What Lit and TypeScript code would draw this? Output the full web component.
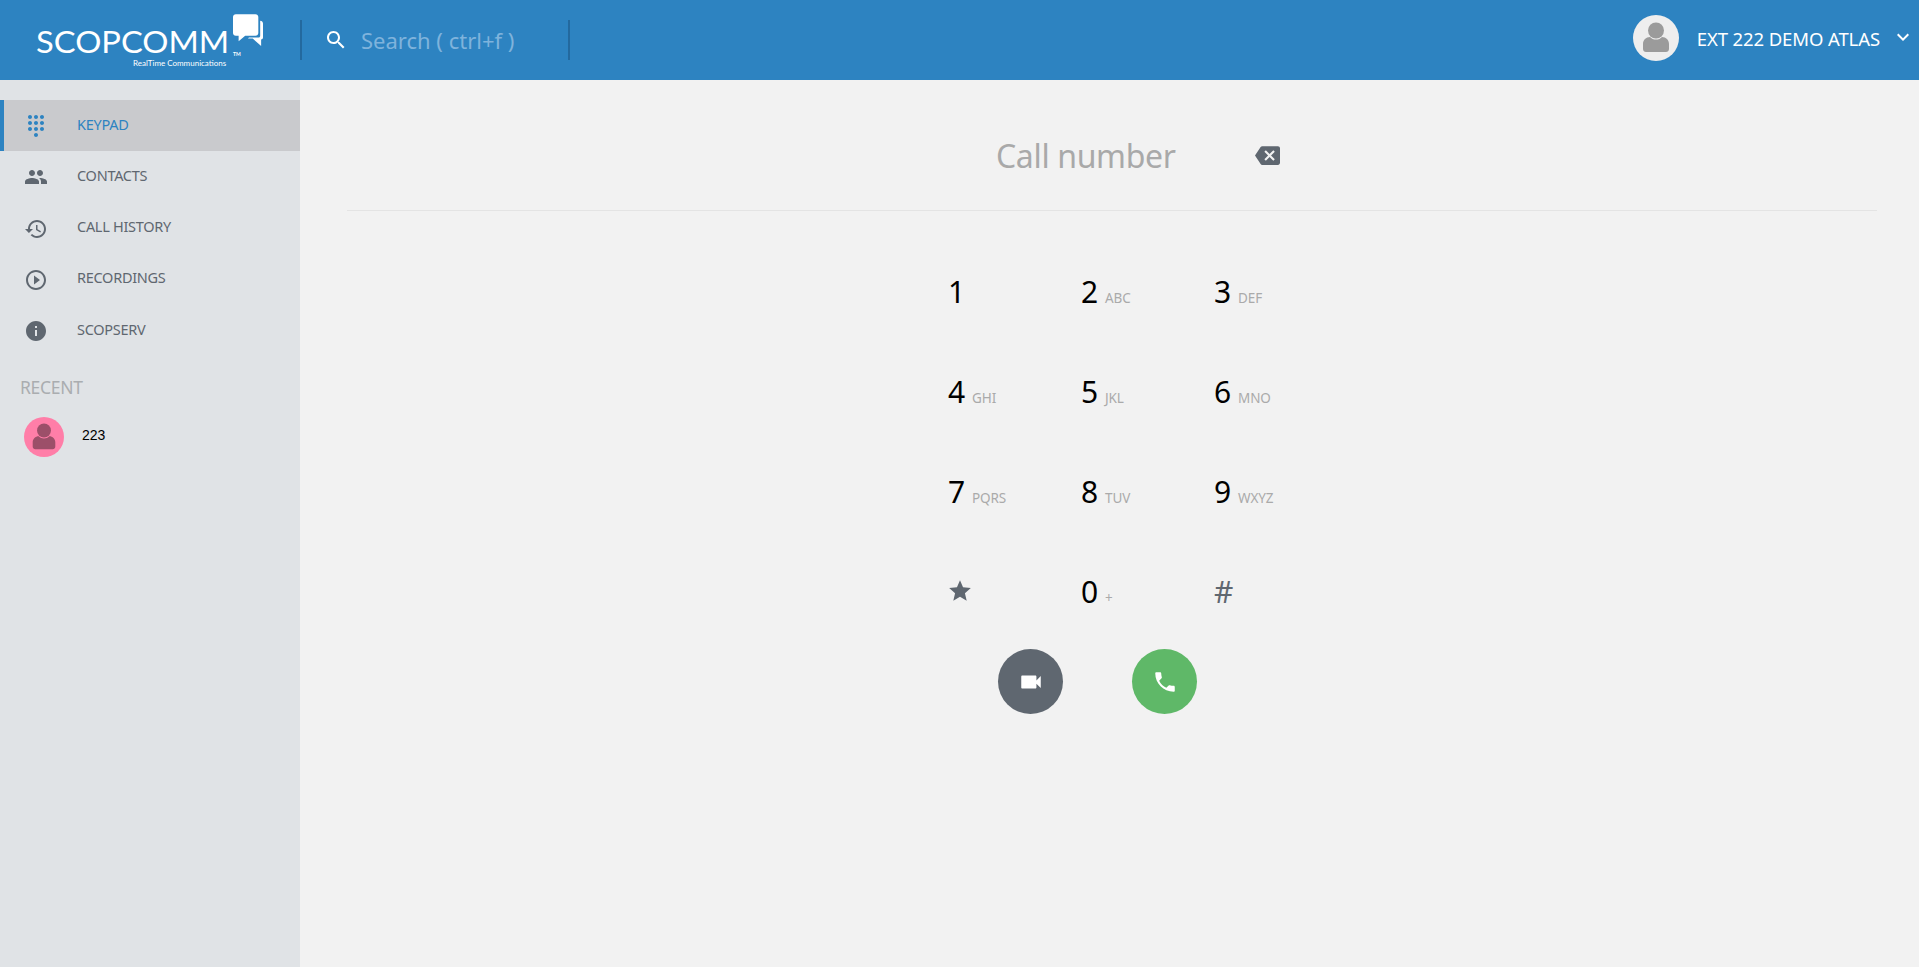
import { LitElement, html, css, svg } from "lit";
import { customElement } from "lit/decorators.js";

const P: Record<string, string> = {
  dialpad: "M12 19c-1.1 0-2 .9-2 2s.9 2 2 2 2-.9 2-2-.9-2-2-2zM6 1c-1.1 0-2 .9-2 2s.9 2 2 2 2-.9 2-2-.9-2-2-2zm0 6c-1.1 0-2 .9-2 2s.9 2 2 2 2-.9 2-2-.9-2-2-2zm0 6c-1.1 0-2 .9-2 2s.9 2 2 2 2-.9 2-2-.9-2-2-2zm12-8c1.1 0 2-.9 2-2s-.9-2-2-2-2 .9-2 2 .9 2 2 2zm-6 8c-1.1 0-2 .9-2 2s.9 2 2 2 2-.9 2-2-.9-2-2-2zm6 0c-1.1 0-2 .9-2 2s.9 2 2 2 2-.9 2-2-.9-2-2-2zm0-6c-1.1 0-2 .9-2 2s.9 2 2 2 2-.9 2-2-.9-2-2-2zm-6 0c-1.1 0-2 .9-2 2s.9 2 2 2 2-.9 2-2-.9-2-2-2zm0-6c-1.1 0-2 .9-2 2s.9 2 2 2 2-.9 2-2-.9-2-2-2z",
  people: "M16 11c1.66 0 2.99-1.34 2.99-3S17.66 5 16 5c-1.66 0-3 1.34-3 3s1.34 3 3 3zm-8 0c1.66 0 2.99-1.34 2.99-3S9.66 5 8 5C6.34 5 5 6.34 5 8s1.34 3 3 3zm0 2c-2.33 0-7 1.17-7 3.5V19h14v-2.5c0-2.33-4.67-3.5-7-3.5zm8 0c-.29 0-.62.02-.97.05 1.16.84 1.97 1.97 1.97 3.45V19h6v-2.5c0-2.33-4.67-3.5-7-3.5z",
  history: "M13 3c-4.97 0-9 4.03-9 9H1l3.89 3.89.07.14L9 12H6c0-3.87 3.13-7 7-7s7 3.13 7 7-3.13 7-7 7c-1.93 0-3.68-.79-4.94-2.06l-1.42 1.42C8.27 19.99 10.51 21 13 21c4.97 0 9-4.03 9-9s-4.03-9-9-9zm-1 5v5l4.28 2.54.72-1.21-3.5-2.08V8H12z",
  play: "M10 16.5l6-4.5-6-4.5v9zM12 2C6.48 2 2 6.48 2 12s4.48 10 10 10 10-4.48 10-10S17.52 2 12 2zm0 18c-4.41 0-8-3.59-8-8s3.59-8 8-8 8 3.59 8 8-3.59 8-8 8z",
  info: "M12 2C6.48 2 2 6.48 2 12s4.48 10 10 10 10-4.48 10-10S17.52 2 12 2zm1 15h-2v-6h2v6zm0-8h-2V7h2v2z",
  backspace: "M22 3H7c-.69 0-1.23.35-1.59.88L0 12l5.41 8.11c.36.53.9.89 1.59.89h15c1.1 0 2-.9 2-2V5c0-1.1-.9-2-2-2zm-3 12.59L17.59 17 14 13.41 10.41 17 9 15.59 12.59 12 9 8.41 10.41 7 14 10.59 17.59 7 19 8.41 15.41 12 19 15.59z",
  video: "M17 10.5V7c0-.55-.45-1-1-1H4c-.55 0-1 .45-1 1v10c0 .55.45 1 1 1h12c.55 0 1-.45 1-1v-3.5l4 4v-11l-4 4z",
  phone: "M6.62 10.79c1.44 2.83 3.76 5.14 6.59 6.59l2.2-2.2c.27-.27.67-.36 1.02-.24 1.12.37 2.33.57 3.57.57.55 0 1 .45 1 1V20c0 .55-.45 1-1 1-9.39 0-17-7.61-17-17 0-.55.45-1 1-1h3.5c.55 0 1 .45 1 1 0 1.25.2 2.45.57 3.57.11.35.03.74-.25 1.02l-2.2 2.2z",
  search: "M15.5 14h-.79l-.28-.27C15.41 12.59 16 11.11 16 9.5 16 5.91 13.09 3 9.5 3S3 5.91 3 9.5 5.91 16 9.5 16c1.61 0 3.09-.59 4.23-1.57l.27.28v.79l5 4.99L20.49 19l-4.99-5zm-6 0C7.01 14 5 11.99 5 9.5S7.01 5 9.5 5 14 7.01 14 9.5 11.99 14 9.5 14z",
  star: "M12 17.27L18.18 21l-1.64-7.03L22 9.24l-7.19-.61L12 2 9.19 8.63 2 9.24l5.46 4.73L5.82 21z",
  chevron: "M16.59 8.59L12 13.17 7.41 8.59 6 10l6 6 6-6z",
};

const icon = (name: string, size: number) => html`<svg class="ic" width=${size} height=${size} viewBox="0 0 24 24" fill="currentColor"><path d=${P[name]}></path></svg>`;

const person = (size: number, c: string) => html`<svg width=${size} height=${size} viewBox="0 0 46 46" fill=${c}>
  <circle cx="23" cy="15.500" r="8"></circle>
  <path d="M10 29c0-4 3-7 7-7 1.500 1.600 3.600 2.600 6 2.600s4.500-1 6-2.600c4 0 7 3 7 7v5c0 2-1.500 3-3 3H13c-1.500 0-3-1-3-3z"></path>
</svg>`;

const NAV = [
  { i: "dialpad", t: "KEYPAD", a: true },
  { i: "people", t: "CONTACTS" },
  { i: "history", t: "CALL HISTORY" },
  { i: "play", t: "RECORDINGS" },
  { i: "info", t: "SCOPSERV" },
];

const KEYS = [
  ["1", ""], ["2", "ABC"], ["3", "DEF"],
  ["4", "GHI"], ["5", "JKL"], ["6", "MNO"],
  ["7", "PQRS"], ["8", "TUV"], ["9", "WXYZ"],
  ["*", ""], ["0", "+"], ["#", ""],
];

@customElement("app-root")
export class AppRoot extends LitElement {
  static styles = css`
    :host { display: block; height: 967px; font-family: "Noto Sans", "Lato", sans-serif; overflow: hidden; background: #f2f2f2; }
    * { box-sizing: border-box; }
    .ic { display: block; flex: none; }

    .top { height: 80px; background: #2d83c1; display: flex; align-items: center; color: #fff; }
    .logo { width: 300px; height: 80px; flex: none; padding: 14px 0 0 36px; display: flex; align-items: flex-start; }
    .logo-text { display: flex; flex-direction: column; align-items: flex-start; padding-top: 12px; width: 197px; flex: none; }
    .logo-name { font-family: "Lato", sans-serif; font-weight: 400; font-size: 30px; line-height: 30px; white-space: nowrap; transform: scaleX(1.09); transform-origin: left center; }
    .logo-sub { font-family: "Lato", sans-serif; font-weight: 400; font-size: 8px; line-height: 10px; margin: 2px 0 0 97px; white-space: nowrap; }
    .tm { font-family: "Lato", sans-serif; font-size: 5px; font-weight: 700; margin: 37px 0 0 0; width: 0; white-space: nowrap; }
    .bubbles { flex: none; }
    .search { width: 270px; height: 40px; flex: none; border-left: 2px solid #23699e; border-right: 2px solid #23699e; display: flex; align-items: center; padding-left: 22px; gap: 13px; color: #7fb3dc; font-size: 22px; }
    .search .ic { color: #fff; }
    .user { margin-left: auto; display: flex; align-items: center; height: 80px; padding: 0 4px 4px 0; font-size: 18.500px; letter-spacing: -.1px; }
    .avatar { width: 46px; height: 46px; border-radius: 50%; background: #eee; margin-right: 18px; display: flex; align-items: center; justify-content: center; }
    .user .name { margin-right: 11px; white-space: nowrap; }
    .user .ic { margin-top: -2px; }

    .body { display: flex; height: 887px; }
    .side { width: 300px; flex: none; background: #e0e3e6; padding-top: 20px; }
    .item { height: 51.250px; padding-bottom: 4px; display: flex; align-items: center; color: #5f6770; font-size: 14.500px; letter-spacing: -.28px; padding-left: 24px; white-space: nowrap; }
    .item .ic { margin: 5px 29px 0 0; }
    .item.active { background: #c9cacd; color: #2d83c1; border-left: 4px solid #2d83c1; padding-left: 20px; }
    .recent-h { color: #aaadb0; font-size: 17.500px; letter-spacing: -.3px; padding: 19px 0 0 20px; line-height: 24px; }
    .recent { display: flex; align-items: center; padding: 18px 0 0 24px; }
    .recent .dot { width: 40px; height: 40px; border-radius: 50%; background: #ff7ea8; display: flex; align-items: center; justify-content: center; margin-right: 18px; }
    .recent .num { font-family: "Liberation Sans", sans-serif; font-size: 14px; color: #000; padding-bottom: 4px; }

    .main { flex: 1; padding: 0 42px 0 47px; }
    .dial { height: 131px; padding: 21px 0 0 649px; display: flex; align-items: center; border-bottom: 1px solid #e4e4e4; }
    .dial .ph { width: 259px; color: #a9a9a9; font-size: 32px; letter-spacing: -.35px; white-space: nowrap; }
    .dial .ic { color: #5f6770; }
    .keys { margin: 31px 0 0 601px; display: grid; grid-template-columns: repeat(3, 133px); grid-auto-rows: 100px; width: 399px; }
    .key { display: flex; align-items: baseline; align-self: center; height: 44px; color: #000; font-size: 30px; line-height: 44px; }
    .key .d { width: 24px; flex: none; }
    .key .d.dim { color: #5f6770; }
    .key .l { color: #aaa; font-size: 13.500px; letter-spacing: -.1px; }
    .star { color: #5f6770; margin: 8px 0 0 -1px; align-self: flex-start; }
    .btns { display: flex; gap: 69px; margin: 7px 0 0 651px; }
    .btn { width: 65px; height: 65px; border-radius: 50%; color: #fff; display: flex; align-items: center; justify-content: center; }
    .btn.v { background: #5f6770; }
    .btn.c { background: #5fb868; }
  `;

  private renderKey(k: string, l: string) {
    if (k === "*") return html`<div class="key"><span class="star">${icon("star", 26)}</span></div>`;
    return html`<div class="key"><span class="d ${k === "#" ? "dim" : ""}">${k}</span>${l ? html`<span class="l">${l}</span>` : ""}</div>`;
  }

  render() {
    return html`
      <div class="top">
        <div class="logo">
          <div class="logo-text">
            <span class="logo-name">SCOPCOMM</span>
            <span class="logo-sub">RealTime Communications</span>
          </div>
          <span class="tm">TM</span>
          <svg class="bubbles" width="30" height="34" viewBox="0 0 32 36" fill="#fff">
            ${svg`<path d="M3 0h21c1.700 0 3 1.300 3 3v17c0 1.700-1.300 3-3 3H13L6 29v-6H3c-1.700 0-3-1.300-3-3V3C0 1.300 1.300 0 3 0z"></path>
            <path d="M29 7c1.700 0 3 1.300 3 3v15c0 1.300-1 2-2 2v7l-9-8h-5l1-1h10c1.500 0 2-1 2-2V7z"></path>`}
          </svg>
        </div>
        <div class="search">${icon("search", 24)}<span>Search ( ctrl+f )</span></div>
        <div class="user">
          <div class="avatar">${person(46, "#9b9b9b")}</div>
          <span class="name">EXT 222 DEMO ATLAS</span>
          ${icon("chevron", 24)}
        </div>
      </div>
      <div class="body">
        <aside class="side">
          ${NAV.map((n) => html`<div class="item ${n.a ? "active" : ""}">${icon(n.i, 24)}<span>${n.t}</span></div>`)}
          <div class="recent-h">RECENT</div>
          <div class="recent">
            <div class="dot">${person(40, "#9c4f69")}</div>
            <span class="num">223</span>
          </div>
        </aside>
        <main class="main">
          <div class="dial"><span class="ph">Call number</span>${icon("backspace", 25)}</div>
          <div class="keys">${KEYS.map(([k, l]) => this.renderKey(k, l))}</div>
          <div class="btns">
            <div class="btn v">${icon("video", 26)}</div>
            <div class="btn c">${icon("phone", 26)}</div>
          </div>
        </main>
      </div>
    `;
  }
}
